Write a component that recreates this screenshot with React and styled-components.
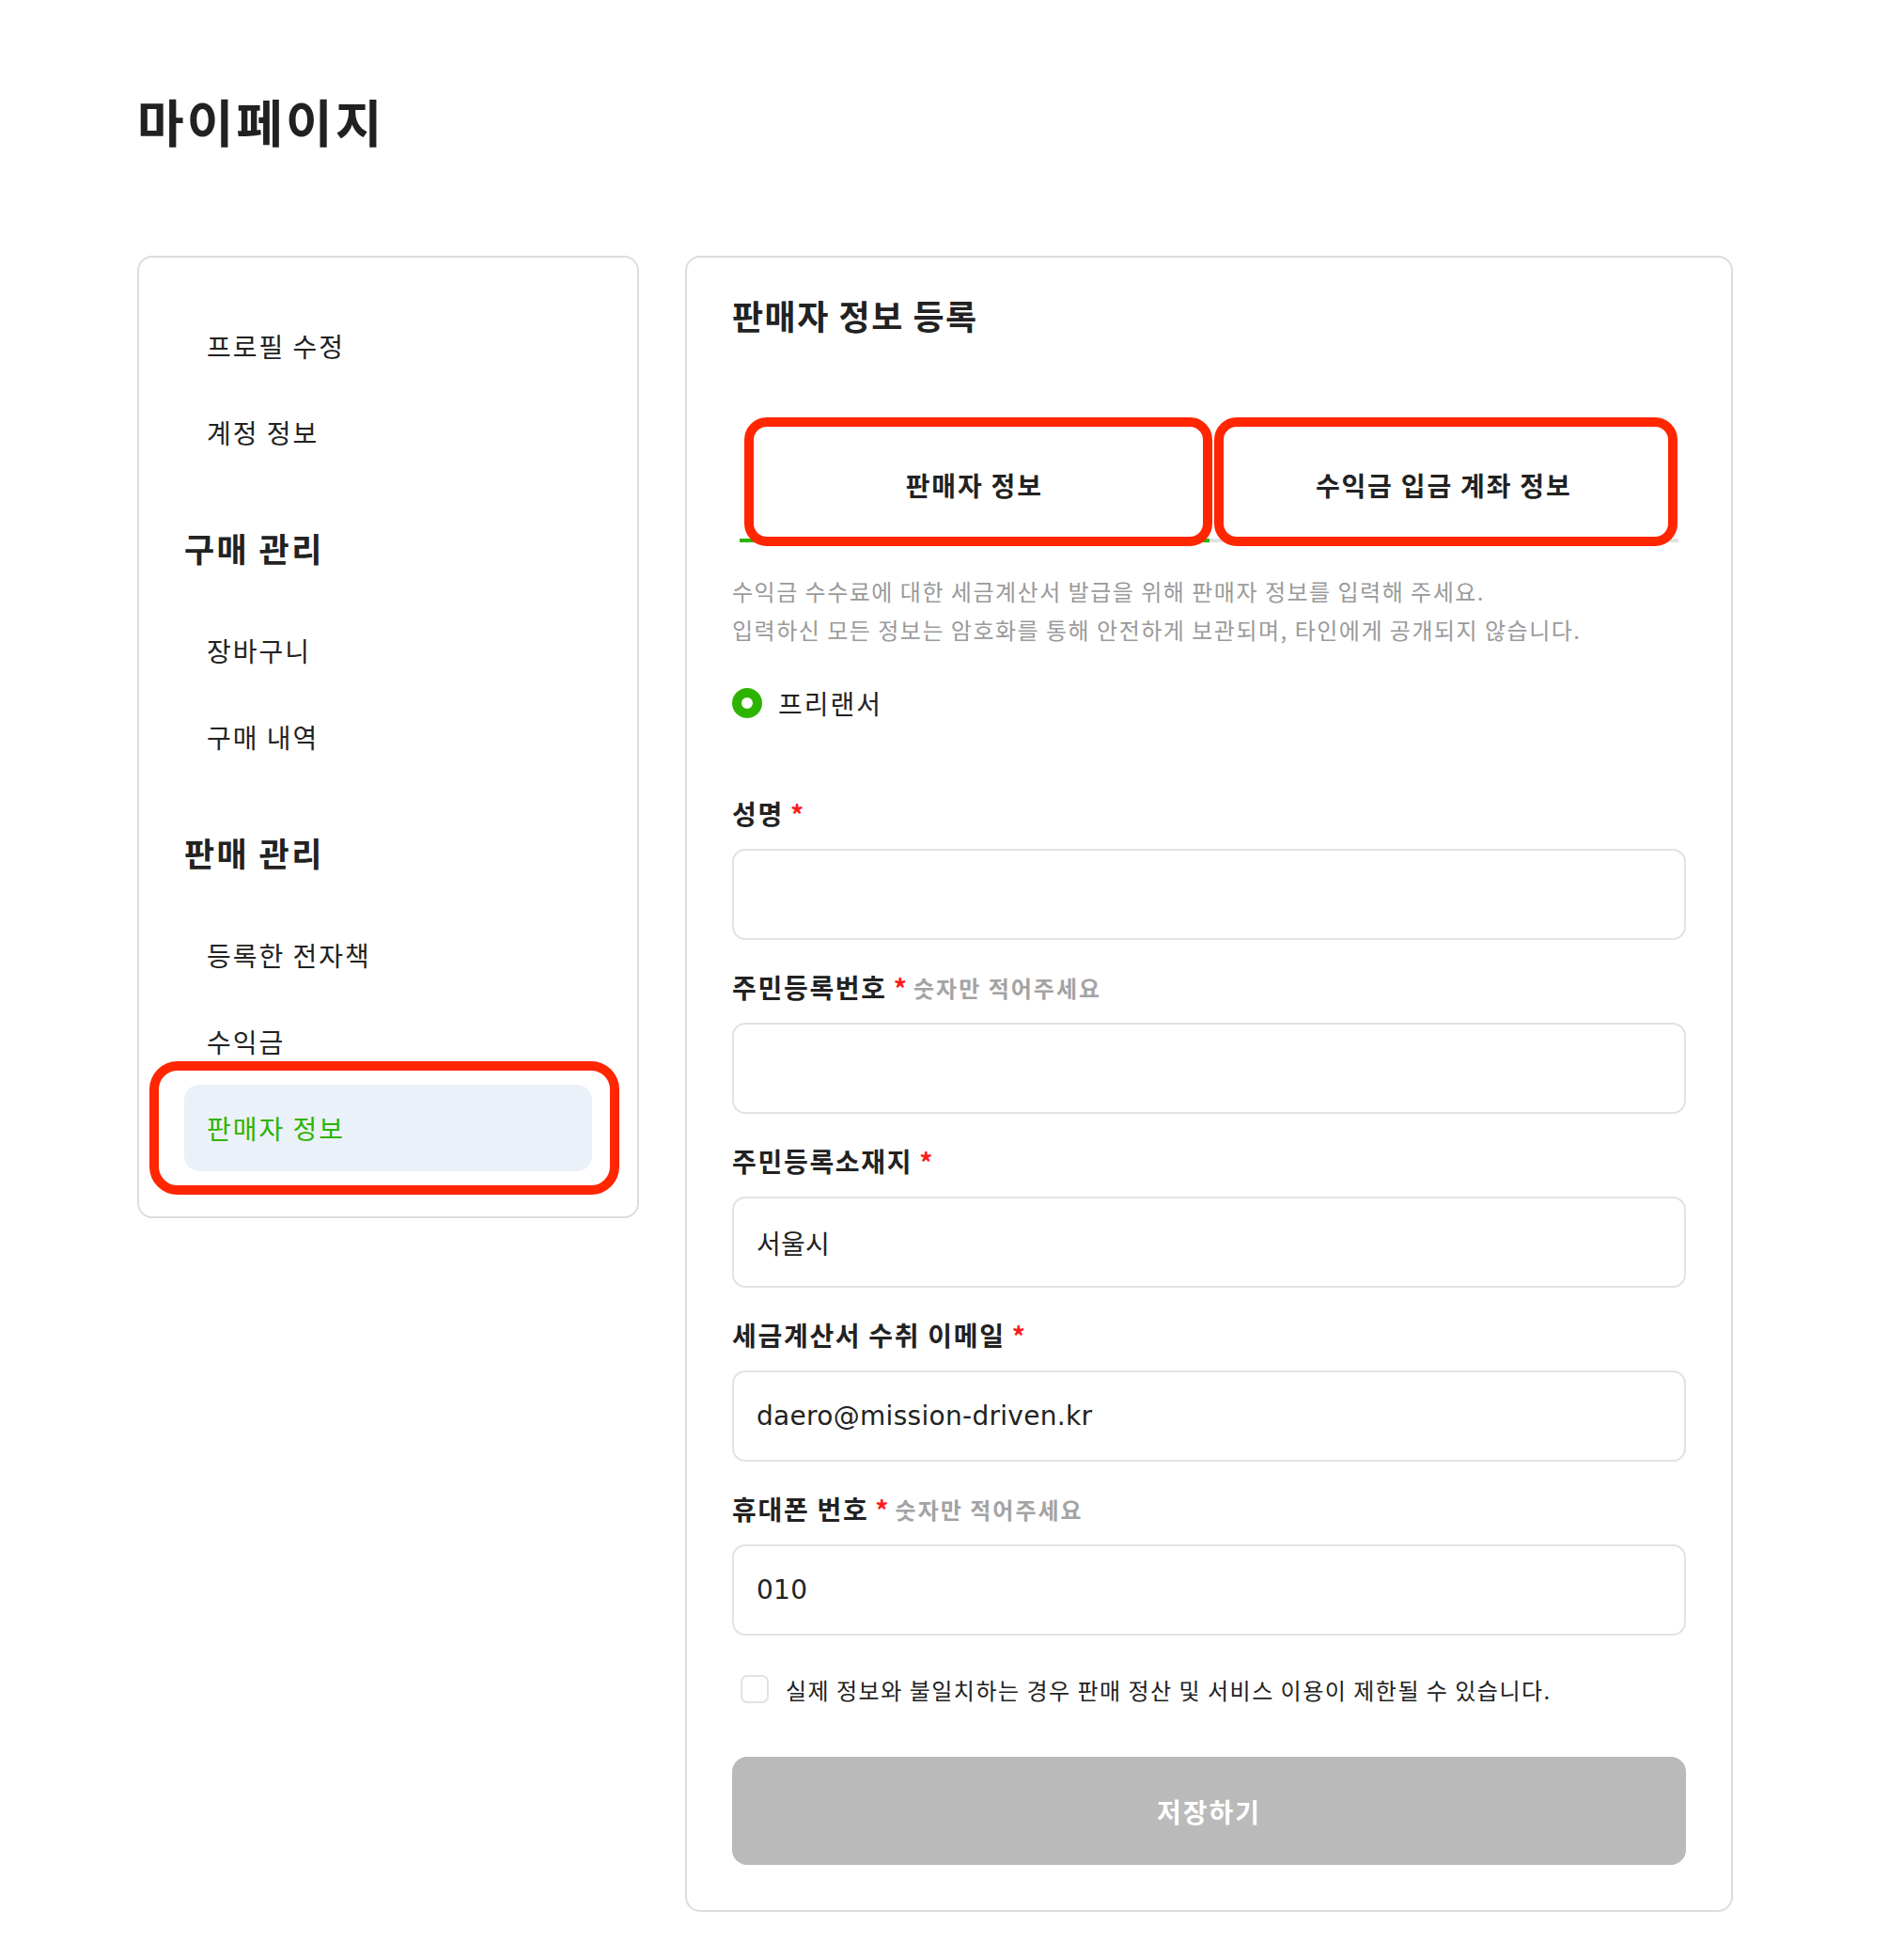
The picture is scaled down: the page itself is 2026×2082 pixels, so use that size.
import styled, { createGlobalStyle } from "styled-components";

const GlobalStyle = createGlobalStyle`
  * { box-sizing: border-box; }
  body {
    margin: 0;
    background: #fff;
    color: #222;
    font-family: "Noto Sans CJK KR", sans-serif;
  }
`;

const Page = styled.div`
  padding: 94px 0 40px 146px;
`;
const PageTitle = styled.h1`
  margin: 0;
  font-size: 54px;
  line-height: 70px;
  font-weight: 700;
  letter-spacing: 3px;
  color: #212121;
`;
const Layout = styled.div`
  display: flex;
  align-items: flex-start;
  gap: 49px;
  margin-top: 108px;
`;

/* sidebar */
const Sidebar = styled.nav`
  width: 534px;
  border: 2px solid #dcdcdc;
  border-radius: 16px;
  padding: 48px;
  display: flex;
  flex-direction: column;
`;
const SideHeading = styled.h3`
  margin: 52px 0 38px;
  font-size: 35px;
  line-height: 50px;
  font-weight: 700;
  letter-spacing: 2.4px;
  color: #222;
`;
const SideItem = styled.a`
  position: relative;
  display: flex;
  align-items: center;
  height: 92px;
  padding-left: 24px;
  border-radius: 16px;
  font-size: 28px;
  letter-spacing: 2px;
  cursor: pointer;
  color: ${(p) => (p.$active ? "#2db400" : "#222")};
  background: ${(p) => (p.$active ? "#ebf1f9" : "transparent")};
`;

/* red annotation box drawn over a part */
const Highlight = styled.span`
  position: absolute;
  inset: ${(p) => p.$inset};
  border: 10px solid #ff2600;
  border-radius: ${(p) => p.$radius}px;
  pointer-events: none;
  z-index: 2;
`;

/* main card */
const Card = styled.section`
  width: 1115px;
  border: 2px solid #dcdcdc;
  border-radius: 16px;
  padding: 36px 48px 48px;
`;
const CardTitle = styled.h2`
  margin: 0;
  font-size: 36px;
  line-height: 50px;
  font-weight: 700;
  letter-spacing: 1.5px;
  color: #222;
`;
const Tabs = styled.div`
  display: flex;
  margin: 95px 8px 0;
`;
const Tab = styled.button`
  position: relative;
  flex: 1;
  height: 122px;
  padding: 4px 0 0;
  background: none;
  border: 0;
  border-bottom: 4px solid ${(p) => (p.$active ? "#2db400" : "#e2e2e2")};
  font-family: "Noto Sans CJK KR", sans-serif;
  font-size: 28px;
  font-weight: 700;
  letter-spacing: 1.8px;
  color: #222;
  cursor: pointer;
`;
const Desc = styled.p`
  margin: 31px 0 0;
  font-size: 24px;
  line-height: 41px;
  letter-spacing: 1.5px;
  color: #9a9a9a;
`;
const RadioRow = styled.label`
  display: flex;
  align-items: center;
  gap: 17px;
  height: 40px;
  margin-top: 38px;
  font-size: 28px;
  letter-spacing: 2px;
  color: #222;
`;
const RadioDot = styled.span`
  width: 32px;
  height: 32px;
  border-radius: 50%;
  border: 10px solid #2db400;
  background: #fff;
`;
const Field = styled.div`
  margin-top: ${(p) => (p.$first ? 77 : 30)}px;
`;
const Label = styled.div`
  display: flex;
  align-items: center;
  height: 40px;
  font-size: 28px;
  font-weight: 700;
  letter-spacing: 1.7px;
  color: #222;
`;
const Req = styled.span`
  margin-left: 7px;
  color: #ff1a1a;
  font-size: 28px;
  font-weight: 700;
  letter-spacing: 0;
  align-self: flex-start;
  margin-top: 1px;
`;
const Hint = styled.span`
  margin-left: 7px;
  font-size: 24px;
  font-weight: 700;
  letter-spacing: 2px;
  color: #a3a3a3;
`;
const Input = styled.input`
  display: block;
  width: 100%;
  height: 97px;
  margin-top: 18px;
  padding: 0 24px;
  border: 2px solid #e2e2e2;
  border-radius: 14px;
  font-family: "DejaVu Sans", "Noto Sans CJK KR", sans-serif;
  font-size: 28px;
  letter-spacing: 0.3px;
  color: #222;
  outline: none;
`;
const CheckRow = styled.label`
  display: flex;
  align-items: center;
  gap: 18px;
  height: 34px;
  margin-top: 40px;
  padding-left: 9px;
  font-size: 24px;
  letter-spacing: 1.5px;
  color: #222;
`;
const Check = styled.input`
  appearance: none;
  margin: 0;
  width: 30px;
  height: 30px;
  border: 2px solid #e2e2e2;
  border-radius: 7px;
  background: #fff;
`;
const SaveButton = styled.button`
  display: block;
  width: 100%;
  height: 115px;
  margin-top: 55px;
  border: 0;
  border-radius: 16px;
  background: #bababa;
  color: #fff;
  font-family: "Noto Sans CJK KR", sans-serif;
  font-size: 28px;
  font-weight: 700;
  letter-spacing: 2px;
`;

const fields = [
  { label: "성명", value: "" },
  { label: "주민등록번호", hint: "숫자만 적어주세요", value: "" },
  { label: "주민등록소재지", value: "서울시" },
  { label: "세금계산서 수취 이메일", value: "daero@mission-driven.kr" },
  { label: "휴대폰 번호", hint: "숫자만 적어주세요", value: "010" },
];

export default function App() {
  return (
    <Page>
      <GlobalStyle />
      <PageTitle>마이페이지</PageTitle>
      <Layout>
        <Sidebar>
          <SideItem>프로필 수정</SideItem>
          <SideItem>계정 정보</SideItem>
          <SideHeading>구매 관리</SideHeading>
          <SideItem>장바구니</SideItem>
          <SideItem>구매 내역</SideItem>
          <SideHeading>판매 관리</SideHeading>
          <SideItem>등록한 전자책</SideItem>
          <SideItem>수익금</SideItem>
          <SideItem $active>
            판매자 정보
            <Highlight $inset="-25px -29px -25px -37px" $radius={30} />
          </SideItem>
        </Sidebar>

        <Card>
          <CardTitle>판매자 정보 등록</CardTitle>
          <Tabs>
            <Tab $active>
              판매자 정보
              <Highlight $inset="-11px -3px -8px 5px" $radius={24} />
            </Tab>
            <Tab>
              수익금 입금 계좌 정보
              <Highlight $inset="-11px 1px -8px 5px" $radius={24} />
            </Tab>
          </Tabs>
          <Desc>
            수익금 수수료에 대한 세금계산서 발급을 위해 판매자 정보를 입력해 주세요.
            <br />
            입력하신 모든 정보는 암호화를 통해 안전하게 보관되며, 타인에게 공개되지 않습니다.
          </Desc>
          <RadioRow>
            <RadioDot />
            프리랜서
          </RadioRow>
          {fields.map((f, i) => (
            <Field key={f.label} $first={i === 0}>
              <Label>
                {f.label}
                <Req>*</Req>
                {f.hint && <Hint>{f.hint}</Hint>}
              </Label>
              <Input defaultValue={f.value} />
            </Field>
          ))}
          <CheckRow>
            <Check type="checkbox" />
            실제 정보와 불일치하는 경우 판매 정산 및 서비스 이용이 제한될 수 있습니다.
          </CheckRow>
          <SaveButton>저장하기</SaveButton>
        </Card>
      </Layout>
    </Page>
  );
}
